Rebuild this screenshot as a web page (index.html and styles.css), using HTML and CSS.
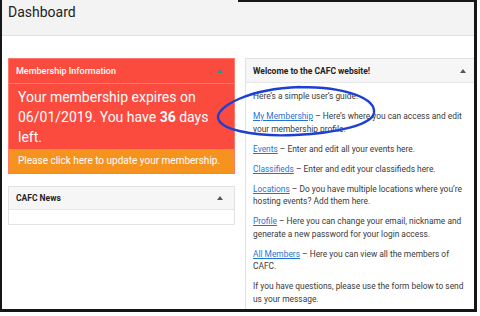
FILE: index.html
```html
<!DOCTYPE html>
<html lang="en">
<head>
    <meta charset="UTF-8">
    <meta name="viewport" content="width=device-width, initial-scale=1.0">
    <title>Dashboard</title>
    <link rel="stylesheet" href="styles.css">
</head>
<body>
    <div class="frame">
        <div class="topbar">
            <h1>Dashboard</h1>
        </div>
        <div class="cols">
            <div class="col-left">
                <div class="alert">
                    <div class="alert-head">
                        <span>Membership Information</span>
                        <span class="caret caret-teal"></span>
                    </div>
                    <div class="alert-body">
                        Your membership expires on 06/01/2019. You have <b>36</b> days left.
                    </div>
                    <div class="alert-foot">Please click here to update your membership.</div>
                </div>
                <div class="box">
                    <div class="box-head">
                        <span>CAFC News</span>
                        <span class="caret"></span>
                    </div>
                    <div class="box-body news-body"></div>
                </div>
            </div>
            <div class="col-right">
                <div class="box welcome">
                    <div class="box-head welcome-head">
                        <span>Welcome to the CAFC website!</span>
                        <span class="caret"></span>
                    </div>
                    <div class="box-body guide">
                        <p>Here’s a simple user’s guide:</p>
                        <p><a href="#">My Membership</a> – Here’s where you can access and edit your membership profile.</p>
                        <p><a href="#">Events</a> – Enter and edit all your events here.</p>
                        <p><a href="#">Classifieds</a> – Enter and edit your classifieds here.</p>
                        <p><a href="#">Locations</a> – Do you have multiple locations where you’re hosting events? Add them here.</p>
                        <p><a href="#">Profile</a> – Here you can change your email, nickname and generate a new password for your login access.</p>
                        <p><a href="#">All Members</a> – Here you can view all the members of CAFC.</p>
                        <p>If you have questions, please use the form below to send us your message.</p>
                    </div>
                </div>
            </div>
        </div>
        <!-- hand drawn circle around My Membership -->
        <svg class="scribble" width="480" height="316" viewBox="0 0 480 316">
            <path d="M 300 87 C 345 87, 376 98, 374 113 C 372 124, 340 133, 295 135 C 252 137, 218 129, 218 117 C 218 107, 246 89, 300 87" fill="none" stroke="#1e3fd2" stroke-width="2.4" stroke-linecap="round"/>
        </svg>
    </div>
</body>
</html>
```

FILE: styles.css
```css
* {
    margin: 0;
    padding: 0;
    box-sizing: border-box;
}
body {
    font-family: Roboto, 'Liberation Sans', sans-serif;
    background: #fff;
    color: #3a3a3a;
}
.frame {
    position: relative;
    width: 477px;
    height: 312px;
    border: solid #161616;
    border-width: 0 3px 3px 2px;
    overflow: hidden;
    background: #fff;
}
/* the screenshot frame only shows its top edge on the right */
.frame::before {
    content: "";
    position: absolute;
    top: 0;
    left: 236px;
    right: 0;
    height: 2px;
    background: #161616;
    z-index: 2;
}
.topbar {
    height: 36px;
    background: #f3f3f3;
    border-bottom: 1px solid #e2e2e2;
    padding: 3px 0 0 6px;
}
.topbar h1 {
    font-size: 14px;
    font-weight: 400;
    line-height: 18px;
    color: #222;
}
.cols {
    display: flex;
    gap: 10px;
    padding: 22px 0 0 6px;
    margin-right: -6px;
}
.col-left {
    width: 227px;
    display: flex;
    flex-direction: column;
    gap: 12px;
}
.col-right {
    flex: 1;
}
.caret {
    width: 0;
    height: 0;
    border-left: 3px solid transparent;
    border-right: 3px solid transparent;
    border-bottom: 4px solid #555;
}
.caret-teal {
    border-bottom-color: #3d8c8c;
}
.alert {
    background: #fb4a3e;
    border: 1px solid #ff7a6c;
    color: #fff;
}
.alert-head {
    height: 25px;
    display: flex;
    align-items: center;
    justify-content: space-between;
    padding: 0 11px 0 7px;
    border-bottom: 1px solid #ff7a6c;
    font-size: 9px;
    font-weight: 500;
}
.alert-body {
    padding: 3px 9px 2px;
    font-size: 14px;
    line-height: 20px;
}
.alert-foot {
    background: #f6931f;
    height: 24px;
    line-height: 24px;
    padding-left: 9px;
    font-size: 10px;
}
.box {
    border: 1px solid #e2e2e2;
    background: #fff;
}
.box-head {
    height: 23px;
    display: flex;
    align-items: center;
    justify-content: space-between;
    padding: 0 11px 0 7px;
    background: #f6f6f6;
    border-bottom: 1px solid #e6e6e6;
    font-size: 8.5px;
    font-weight: 700;
    color: #222;
}
.welcome {
    min-height: 270px;
}
.welcome-head {
    height: 24px;
    padding-right: 13px;
}
.news-body {
    height: 14px;
}
.guide {
    padding: 7px 10px 0 7px;
    font-size: 8.4px;
    line-height: 12.5px;
}
.guide p {
    margin-bottom: 7.5px;
}
.guide a {
    color: #1f74d6;
}
.scribble {
    position: absolute;
    left: -2px;
    top: 0;
    pointer-events: none;
}
```
